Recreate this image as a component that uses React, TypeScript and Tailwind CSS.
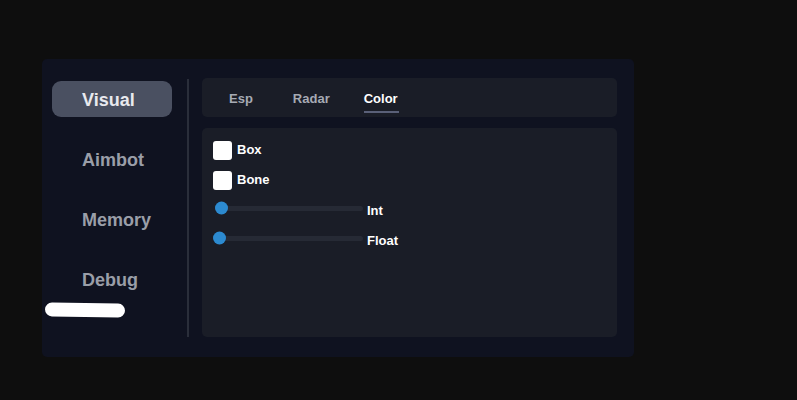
import React from "react";

const font = { fontFamily: '"Liberation Sans", Arial, sans-serif' };

function Check({ label }: { label: string }) {
  return (
    <div className="flex items-center h-[30px]">
      <div className="w-[19px] h-[19px] rounded-[3px] bg-white" />
      <span className="ml-[5px] text-[13px] font-bold text-white">{label}</span>
    </div>
  );
}

function Slider({ label, pos }: { label: string; pos: number }) {
  return (
    <div className="flex items-center h-[30px]">
      <div className="relative w-[148px] h-[5px] ml-[2px] rounded-full bg-[#262a35]">
        <div
          className="absolute top-1/2 -translate-y-1/2 w-[13px] h-[13px] rounded-full bg-[#2c8ad0]"
          style={{ left: pos }}
        />
      </div>
      <span className="ml-[4px] mt-[5px] text-[13px] font-bold text-white">{label}</span>
    </div>
  );
}

export default function App() {
  const items = ["Visual", "Aimbot", "Memory", "Debug"];
  return (
    <div className="w-[797px] h-[400px] bg-[#0e0e0e] pt-[59px] pl-[42px]" style={font}>
      <div className="relative w-[592px] h-[298px] rounded-[5px] bg-[#0f1220] flex">
        <div className="w-[145px] pl-[10px] pt-[22px] flex flex-col gap-[24px]">
          {items.map((it, i) => (
            <div
              key={it}
              className={
                "w-[120px] h-[36px] rounded-[9px] flex items-center pl-[30px] pt-[2px] text-[18px] font-bold " +
                (i === 0 ? "bg-[#4a5061] text-[#e8e9ee]" : "text-[#9a9ea8]")
              }
            >
              {it}
            </div>
          ))}
        </div>
        <div className="w-[2px] mt-[20px] h-[258px] bg-[#2a2e3a]" />
        <div className="ml-[13px] pt-[19px] flex flex-col gap-[11px]">
          <div className="w-[415px] h-[39px] rounded-[5px] bg-[#1a1d27] flex items-center pl-[27px] pt-[2px] text-[13px] font-bold">
            <span className="text-[#a6aab4]">Esp</span>
            <span className="ml-[40px] text-[#a6aab4]">Radar</span>
            <span className="ml-[34px] relative text-white">
              Color
              <span className="absolute left-0 -right-[1px] -bottom-[5px] h-[2px] bg-[#5a6078]" />
            </span>
          </div>
          <div className="w-[415px] h-[209px] rounded-[5px] bg-[#1a1d27] pl-[11px] pt-[7px]">
            <Check label="Box" />
            <Check label="Bone" />
            <div className="-mt-[2px]">
              <Slider label="Int" pos={0} />
              <Slider label="Float" pos={-2} />
            </div>
          </div>
        </div>
        <div className="absolute left-[3px] top-[244px] w-[80px] h-[14px] bg-white rounded-[8px] rotate-[1deg]" />
      </div>
    </div>
  );
}
